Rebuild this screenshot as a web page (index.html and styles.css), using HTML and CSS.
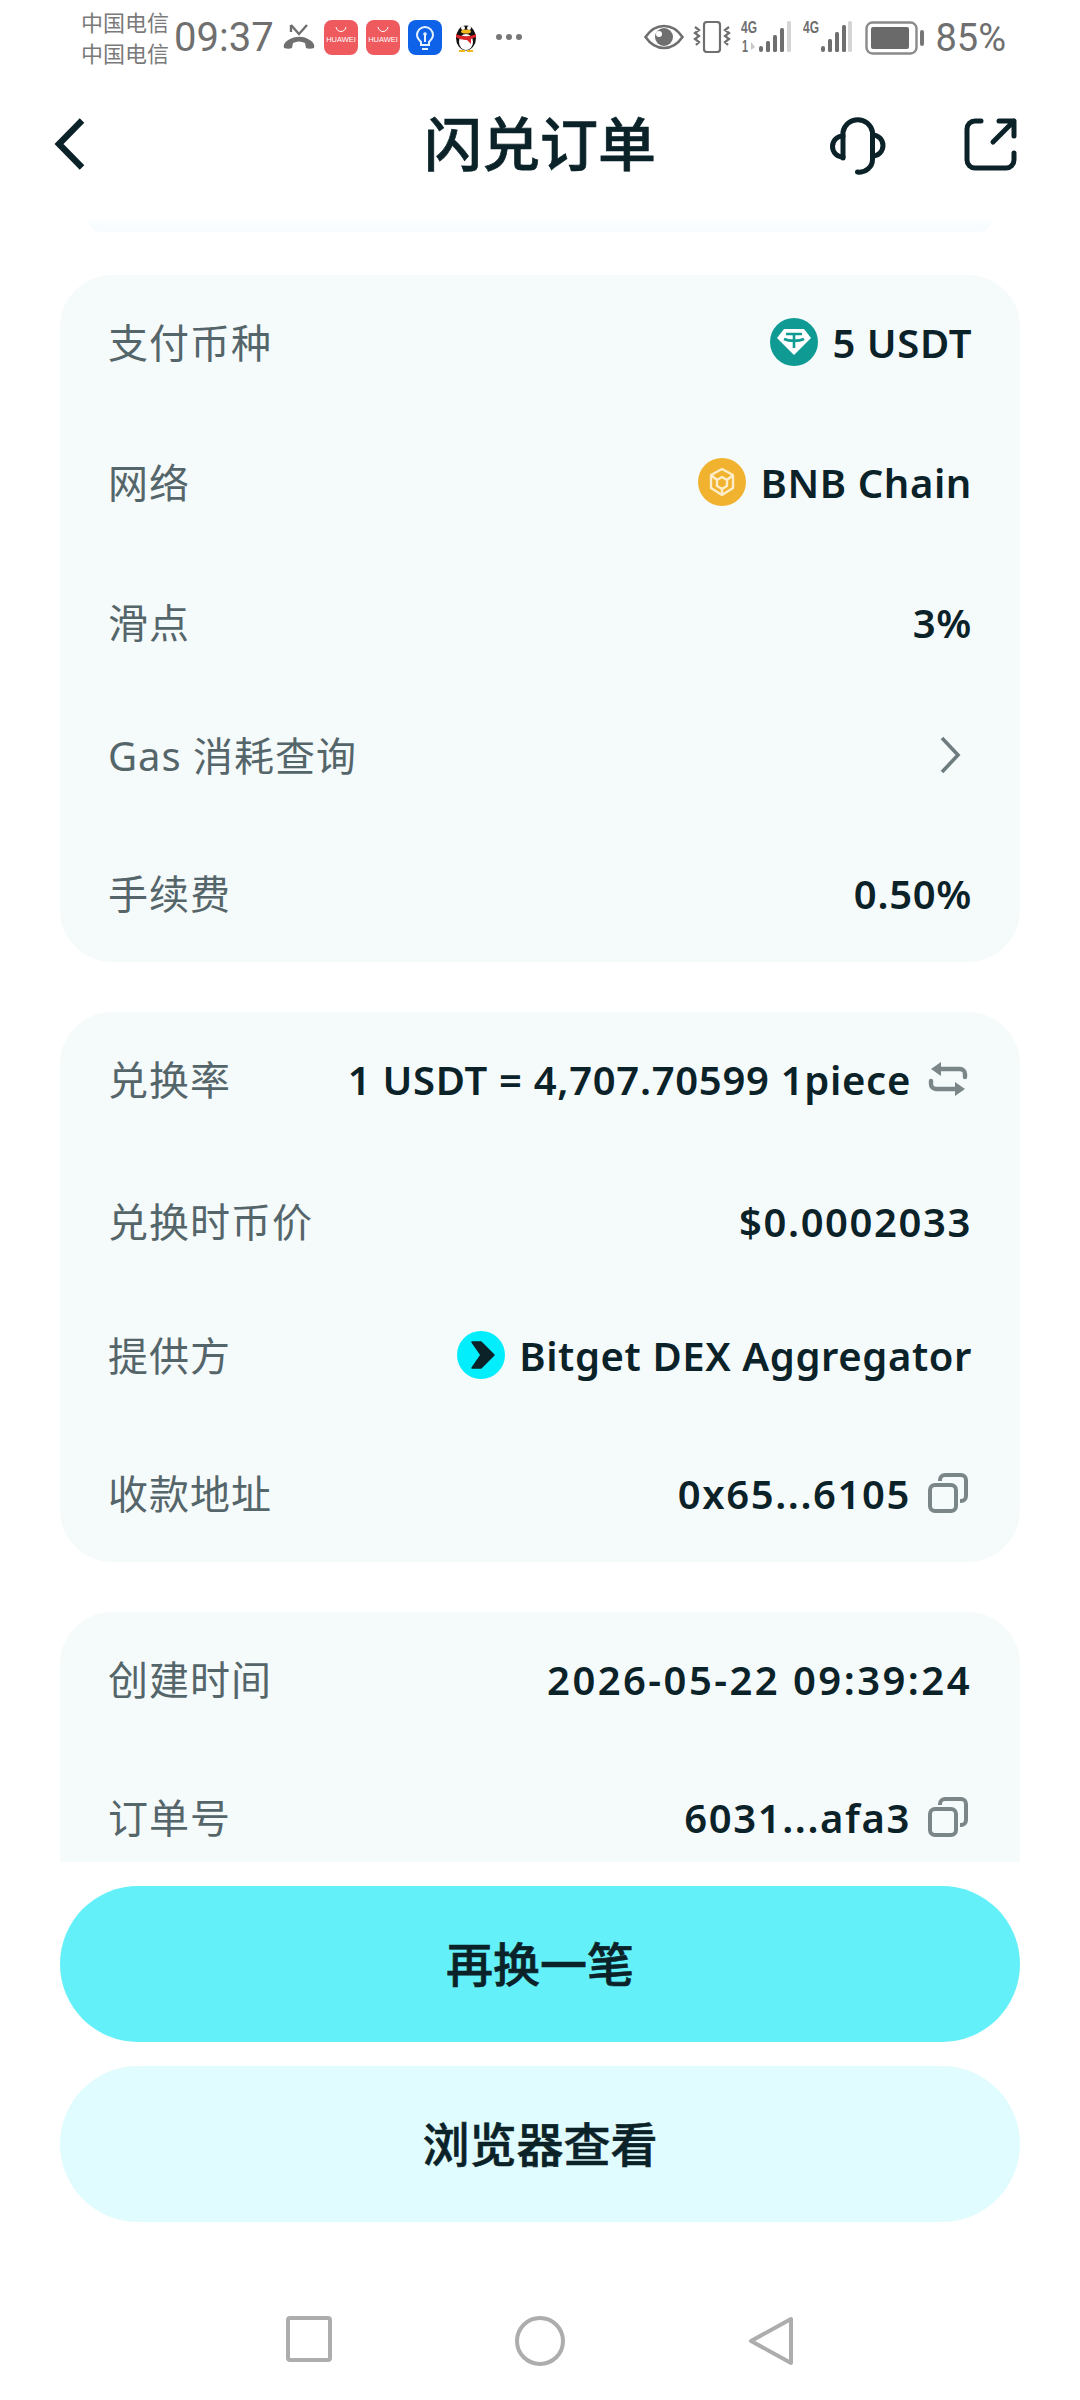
FILE: index.html
```html
<!DOCTYPE html>
<html lang="zh-CN">
<head>
<meta charset="utf-8">
<title>闪兑订单</title>
<link rel="stylesheet" href="styles.css">
</head>
<body>
<div class="screen">
  <div class="status">
    <div class="carrier"><span>中国电信</span><span>中国电信</span></div>
    <span class="time">09:37</span>
    <svg class="ic-call" viewBox="0 0 34 30" width="34" height="30"><path d="M9 3l8 9 8-9M9 3v7" fill="none" stroke="#6f6f6f" stroke-width="2.4"/><path d="M2 26c-1-4 1-6 6-9 6-3 13-3 18 0 5 3 7 5 6 9-3 1-6 1-8 0l-1-5c-4-2-8-2-12 0l-1 5c-2 1-5 1-8 0z" fill="#6f6f6f"/></svg>
    <svg class="ic-app" viewBox="0 0 34 35" width="34" height="35"><rect width="34" height="35" rx="8" fill="#ee5a5e"/><path d="M12 7c1 6 9 6 10 0" fill="none" stroke="#fff" stroke-width="1"/><text x="17" y="22" text-anchor="middle" class="hw">HUAWEI</text></svg>
    <svg class="ic-app" viewBox="0 0 34 35" width="34" height="35"><rect width="34" height="35" rx="8" fill="#ee5a5e"/><path d="M12 7c1 6 9 6 10 0" fill="none" stroke="#fff" stroke-width="1"/><text x="17" y="22" text-anchor="middle" class="hw">HUAWEI</text></svg>
    <svg class="ic-app" viewBox="0 0 34 35" width="34" height="35"><rect width="34" height="35" rx="8" fill="#0d62e8"/><path d="M13 25v-3c-2-2-4-4-4-7a8 8 0 0 1 16 0c0 3-2 5-4 7v3zM14 29h6M17 14v8" fill="none" stroke="#e6f0ff" stroke-width="2"/><circle cx="17" cy="14" r="1.8" fill="#e6f0ff"/></svg>
    <svg class="ic-qq" viewBox="0 0 26 32" width="26" height="32"><ellipse cx="13" cy="18" rx="10" ry="12.500" fill="#111"/><ellipse cx="13" cy="22" rx="7" ry="8" fill="#fff"/><circle cx="10" cy="8" r="2" fill="#fff"/><circle cx="16" cy="8" r="2" fill="#fff"/><ellipse cx="13" cy="11.500" rx="5" ry="2" fill="#f3b81c"/><path d="M3 14c6 3 14 3 20 0v3l-5 2v5l-4-4c-4 0-9-1-11-3z" fill="#d9262b"/><path d="M6 31h6M14 31h6" stroke="#f3b81c" stroke-width="2"/></svg>
    <span class="dots"><i></i><i></i><i></i></span>
    <span class="status-fill"></span>
    <svg class="ic-eye" viewBox="0 0 40 26" width="40" height="26"><path d="M1.500 13C7 5 13 2 20 2s13 3 18.500 11C33 21 27 24 20 24S7 21 1.500 13z" fill="none" stroke="#6f6f6f" stroke-width="2.600"/><circle cx="20" cy="13" r="9" fill="#6f6f6f"/><circle cx="15" cy="10" r="3" fill="#fff"/></svg>
    <svg class="ic-vib" viewBox="0 0 38 32" width="38" height="32"><rect x="11" y="1" width="16" height="30" rx="3" fill="none" stroke="#6f6f6f" stroke-width="2.200"/><path d="M2 6l4 3-4 3 4 3-4 3 4 3-3 3M36 6l-4 3 4 3-4 3 4 3-4 3 3 3" fill="none" stroke="#6f6f6f" stroke-width="2.200"/></svg>
    <svg class="ic-sig" viewBox="0 0 52 34" width="52" height="34"><text x="0" y="13" class="sig" textLength="16" lengthAdjust="spacingAndGlyphs">4G</text><text x="1" y="32" class="sig" textLength="6" lengthAdjust="spacingAndGlyphs">1</text><path d="M10 22v8l4-3z" fill="#c8c8c8"/><rect x="18" y="26" width="4" height="6" rx="2" fill="#6f6f6f"/><rect x="25" y="21" width="4" height="11" rx="1.500" fill="#6f6f6f"/><rect x="32" y="15" width="4" height="17" rx="1.500" fill="#6f6f6f"/><rect x="39" y="8" width="4" height="24" rx="1.500" fill="#6f6f6f"/><rect x="46" y="1" width="4" height="31" rx="1.500" fill="#d5d5d5"/></svg>
    <svg class="ic-sig2" viewBox="0 0 50 34" width="50" height="34"><text x="0" y="13" class="sig" textLength="16" lengthAdjust="spacingAndGlyphs">4G</text><rect x="18" y="26" width="4" height="6" rx="2" fill="#6f6f6f"/><rect x="25" y="19" width="4" height="13" rx="1.500" fill="#6f6f6f"/><rect x="32" y="12" width="4" height="20" rx="1.500" fill="#6f6f6f"/><rect x="39" y="5" width="4" height="27" rx="1.500" fill="#6f6f6f"/><rect x="45" y="1" width="4" height="31" rx="1.500" fill="#d5d5d5"/></svg>
    <svg class="ic-bat" viewBox="0 0 60 34" width="60" height="34"><rect x="1.500" y="1.500" width="50" height="31" rx="6" fill="none" stroke="#8a8a8a" stroke-width="2.400"/><rect x="6" y="6" width="38" height="22" rx="2" fill="#6a6a6a"/><rect x="55" y="9" width="4" height="16" rx="2" fill="#777"/></svg>
    <span class="pct">85%</span>
  </div>

  <header class="topbar">
    <div class="top-left">
      <svg viewBox="0 0 40 64" width="40" height="64"><path d="M32 8.500L9 32l23 23.500" fill="none" stroke="#0a2228" stroke-width="6.400"/></svg>
    </div>
    <h1 class="title">闪兑订单</h1>
    <div class="top-right">
      <svg class="ic-headset" viewBox="0 0 60 60" width="60" height="60"><path d="M15 43V17a15 15 0 0 1 29.500 0v27a13 13 0 0 1-15 13" fill="none" stroke="#0a2228" stroke-width="5" stroke-linecap="round"/><path d="M15 21a10.500 10.500 0 0 0 0 21M44.500 20a10.500 10.500 0 0 1 0 21" fill="none" stroke="#0a2228" stroke-width="5" stroke-linecap="round"/></svg>
      <svg viewBox="0 0 56 56" width="56" height="56"><path d="M19 5h-6a8 8 0 0 0-8 8v31a8 8 0 0 0 8 8h31a8 8 0 0 0 8-8v-7M31 26L52 5M37 5h15v15" fill="none" stroke="#0a2228" stroke-width="5" stroke-linecap="round" stroke-linejoin="round"/></svg>
    </div>
  </header>

  <main class="content">
    <div class="stub"></div>
    <section class="card card-one">
      <div class="row">
        <span class="label">支付币种</span>
        <span class="value value-coin">
          <svg class="coin" viewBox="0 0 48 48" width="48" height="48"><circle cx="24" cy="24" r="24" fill="#0f9b94"/><path d="M14 11h20l7 9-17 17L7 20z" fill="#fff"/><path d="M16 16h16M24 16v14M14 21c5 2.500 15 2.500 20 0" fill="none" stroke="#0f9b94" stroke-width="2.600"/></svg>
          5 USDT
        </span>
      </div>
      <div class="row">
        <span class="label">网络</span>
        <span class="value value-coin">
          <svg class="coin" viewBox="0 0 48 48" width="48" height="48"><circle cx="24" cy="24" r="24" fill="#f1b22f"/><path d="M24 11l11 6v13l-11 7-11-7V17zM24 19l-5 3v6l5 3 5-3v-6zM13 17l6 5M35 17l-6 5M24 31v6" fill="none" stroke="#fdeec9" stroke-width="2.400" stroke-linejoin="round"/></svg>
          BNB Chain
        </span>
      </div>
      <div class="row">
        <span class="label">滑点</span>
        <span class="value">3%</span>
      </div>
      <div class="row">
        <span class="label">Gas 消耗查询</span>
        <svg class="row-arrow" viewBox="0 0 22 40" width="22" height="40"><path d="M3 3l16 17L3 37" fill="none" stroke="#6f7c7f" stroke-width="3.600"/></svg>
      </div>
      <div class="row">
        <span class="label">手续费</span>
        <span class="value">0.50%</span>
      </div>
    </section>

    <section class="card card-two">
      <div class="row">
        <span class="label">兑换率</span>
        <span class="value value-tool">1 USDT = 4,707.70599 1piece
          <svg viewBox="0 0 40 38" width="40" height="38"><path d="M12 9h20a5 5 0 0 1 5 5v3M28 29H8a5 5 0 0 1-5-5v-3" fill="none" stroke="#7a8688" stroke-width="4.400" stroke-linecap="round"/><path d="M13 2v14L3 9zM27 22v14l10-7z" fill="#7a8688"/></svg>
        </span>
      </div>
      <div class="row">
        <span class="label">兑换时币价</span>
        <span class="value value-num">$0.0002033</span>
      </div>
      <div class="row">
        <span class="label">提供方</span>
        <span class="value value-coin">
          <svg class="coin" viewBox="0 0 48 48" width="48" height="48"><circle cx="24" cy="24" r="24" fill="#02eefc"/><path d="M15 11h9l13 13-13 13h-9l9-13z" fill="#0a2228" stroke="#0a2228" stroke-width="1.500" stroke-linejoin="round"/></svg>
          Bitget DEX Aggregator
        </span>
      </div>
      <div class="row">
        <span class="label">收款地址</span>
        <span class="value value-tool value-num">0x65...6105
          <svg viewBox="0 0 40 40" width="40" height="40"><rect x="2" y="12" width="26" height="26" rx="5" fill="none" stroke="#7a8688" stroke-width="4"/><path d="M12 8V7a5 5 0 0 1 5-5h16a5 5 0 0 1 5 5v16a5 5 0 0 1-5 5h-1" fill="none" stroke="#7a8688" stroke-width="4"/></svg>
        </span>
      </div>
    </section>

    <section class="card card-three">
      <div class="row">
        <span class="label">创建时间</span>
        <span class="value value-date">2026-05-22 09:39:24</span>
      </div>
      <div class="row">
        <span class="label">订单号</span>
        <span class="value value-tool value-num">6031...afa3
          <svg viewBox="0 0 40 40" width="40" height="40"><rect x="2" y="12" width="26" height="26" rx="5" fill="none" stroke="#7a8688" stroke-width="4"/><path d="M12 8V7a5 5 0 0 1 5-5h16a5 5 0 0 1 5 5v16a5 5 0 0 1-5 5h-1" fill="none" stroke="#7a8688" stroke-width="4"/></svg>
        </span>
      </div>
    </section>
  </main>

  <footer class="actions">
    <button class="btn btn-primary">再换一笔</button>
    <button class="btn btn-soft">浏览器查看</button>
  </footer>

  <nav class="navbar">
    <svg viewBox="0 0 46 46" width="46" height="46"><rect x="2" y="2" width="42" height="42" rx="2" fill="none" stroke="#adadad" stroke-width="4"/></svg>
    <svg viewBox="0 0 50 50" width="50" height="50"><circle cx="25" cy="25" r="23" fill="none" stroke="#adadad" stroke-width="4"/></svg>
    <svg viewBox="0 0 46 50" width="46" height="50"><path d="M43 3v44L3 25z" fill="none" stroke="#adadad" stroke-width="4" stroke-linejoin="round"/></svg>
  </nav>
</div>
</body>
</html>
```

FILE: styles.css
```css
* { box-sizing: border-box; }
html, body { margin: 0; padding: 0; background: #fff; }
body { font-family: "Noto Sans", "Noto Sans CJK SC", sans-serif; color: #0a2228; }
.screen { width: 1080px; height: 2400px; display: flex; flex-direction: column; overflow: hidden; background: #fff; }

.status { height: 72px; padding: 6px 74px 0 81px; display: flex; align-items: flex-start; color: #6f6f6f; flex: none; }
.status svg { flex: none; display: block; }
.carrier { display: flex; flex-direction: column; font-family: "Noto Sans CJK SC", sans-serif; font-size: 22px; line-height: 31px; width: 93px; color: #7a7a7a; }
.time { font-family: Roboto, sans-serif; font-size: 40px; line-height: 46px; width: 108px; margin-top: 9px; }
.ic-call { margin-top: 16px; margin-right: 8px; }
.ic-app { margin-top: 14px; margin-right: 8px; }
.ic-qq { margin-top: 14px; margin-left: 3px; margin-right: 17px; }
.hw { font-family: "Liberation Sans", sans-serif; font-size: 7.500px; fill: #fff; }
.sig { font-family: "Liberation Sans", sans-serif; font-size: 16px; font-weight: 700; fill: #6f6f6f; }
.dots { display: flex; gap: 4px; margin-top: 28px; }
.dots i { width: 6px; height: 6px; border-radius: 50%; background: #777; }
.status-fill { flex: 1; }
.ic-eye { margin-top: 18px; margin-right: 9px; }
.ic-vib { margin-top: 15px; margin-right: 10px; }
.ic-sig { margin-top: 14px; margin-right: 10px; }
.ic-sig2 { margin-top: 14px; margin-right: 12px; }
.ic-bat { margin-top: 15px; margin-right: 10px; }
.pct { font-family: Roboto, sans-serif; font-size: 38px; line-height: 46px; margin-top: 9px; }

.topbar { height: 143px; flex: none; display: grid; grid-template-columns: 1fr auto 1fr; align-items: center; padding: 0 62px 0 50px; }
.top-left { display: flex; }
.top-right { display: flex; justify-content: flex-end; align-items: center; gap: 74px; }
.top-right svg { display: block; }
.ic-headset { margin-top: 3px; }
.title { margin: -6px -12px 0 0; font-family: "Noto Sans CJK SC", sans-serif; font-size: 58px; line-height: 80px; font-weight: 500; -webkit-text-stroke: 0.700px #0a2228; color: #0a2228; }

.content { height: 1647px; flex: none; overflow: hidden; padding: 0 60px; }
.stub { height: 12px; margin: 5px 28px 43px; background: linear-gradient(#fcfeff, #f7fcfe); border-radius: 0 0 24px 24px; }
.card { background: #f5fafb; border-radius: 52px; padding: 37px 48px 0 48px; margin-bottom: 50px; }
.card-one { height: 687px; }
.card-two { height: 550px; }
.card-three { height: 400px; }
.row { height: 60px; display: flex; justify-content: space-between; align-items: center; margin-top: 80px; }
.row:first-child { margin-top: 0; }
.card-one .row:nth-child(4) { margin-top: 73px; }
.card-one .row:nth-child(5) { margin-top: 78px; }
.card-two .row:nth-child(2) { margin-top: 82px; }
.card-two .row:nth-child(3) { margin-top: 74px; }
.card-two .row:nth-child(4) { margin-top: 78px; }
.card-three .row:nth-child(2) { margin-top: 78px; }
.label { font-size: 40px; color: #55666a; letter-spacing: 1px; margin-top: -3px; }
.value { display: flex; align-items: center; gap: 17px; font-size: 40px; font-weight: 570; color: #0a2228; letter-spacing: 0.700px; white-space: nowrap; }
.value-coin { gap: 14px; letter-spacing: 0.600px; }
.value-num { letter-spacing: 1.600px; }
.value-date { letter-spacing: 2.450px; }
.value-tool { margin-right: 4px; }
.row-arrow { margin-right: 11px; }
.coin { display: block; flex: none; }

.actions { height: 360px; flex: none; padding: 24px 60px 0; display: flex; flex-direction: column; gap: 24px; }
.btn { height: 156px; border: 0; border-radius: 78px; padding: 0 0 6px; font-family: "Noto Sans CJK SC", sans-serif; font-size: 47px; font-weight: 500; -webkit-text-stroke: 0.600px #0a2228; color: #0a2228; }
.btn-primary { background: #64f0f8; }
.btn-soft { background: #e1fcfe; }

.navbar { flex: 1; display: flex; justify-content: center; align-items: flex-start; padding-top: 94px; gap: 183px; }
.navbar svg { display: block; }
```
